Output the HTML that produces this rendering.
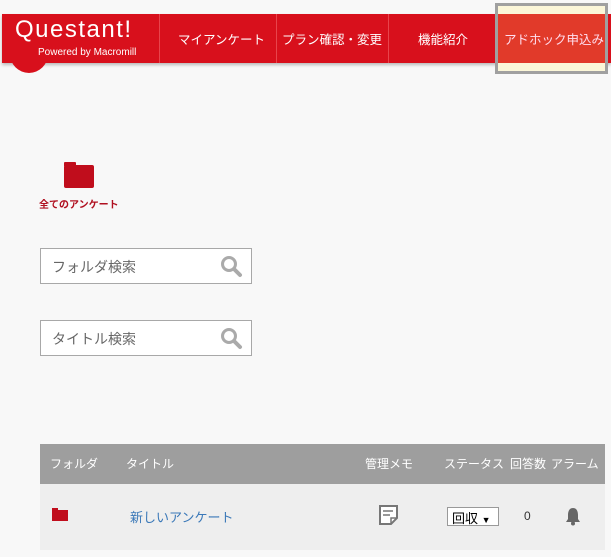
<!DOCTYPE html>
<html><head><meta charset="utf-8"><style>
*{margin:0;padding:0;box-sizing:border-box}
body{width:611px;height:557px;background:#f8f8f8;position:relative;overflow:hidden;font-family:"Liberation Sans","Noto Sans CJK JP",sans-serif}
.abs{position:absolute}
.hdr{left:2px;top:14px;width:609px;height:49px;background:#d8101c;box-shadow:0 2px 3px rgba(0,0,0,.25)}
.circ{left:10px;top:40px;width:38px;height:33px;border-radius:0 0 19px 19px;background:#d8101c}
.nav{color:#fff;font-size:12.5px;top:29px;white-space:nowrap}
.div{top:14px;width:1px;height:49px;background:#e8444c}
.sb{left:40px;width:212px;height:36px;border:1px solid #a8a8a8;background:#fff;font-size:14px;color:#666;padding:8px 0 0 11px}
.th{color:#fff;font-size:12px;top:455px}
</style></head><body>
<div class="abs hdr"></div>
<div class="abs circ"></div>
<div class="abs" style="left:15px;top:16px;color:#fff;font-size:24px;letter-spacing:1.5px;font-family:'Liberation Sans',sans-serif">Questant!</div>
<div class="abs" style="left:38px;top:47px;color:#fff;font-size:10px">Powered by Macromill</div>
<div class="abs div" style="left:159px"></div>
<div class="abs div" style="left:276px"></div>
<div class="abs div" style="left:388px"></div>
<div class="abs nav" style="left:178px">マイアンケート</div>
<div class="abs nav" style="left:282px">プラン確認・変更</div>
<div class="abs nav" style="left:418px">機能紹介</div>
<div class="abs" style="left:495px;top:3px;width:113px;height:71px;border:3px solid #a0a0a0;background:#fbf6d8"></div>
<div class="abs" style="left:498px;top:14px;width:107px;height:49px;background:#e13a2a"></div>
<div class="abs nav" style="left:504px;color:#fde">アドホック申込み</div>
<div class="abs" style="left:64px;top:162px;width:12px;height:4px;background:#c00d1c;border-radius:1px 1px 0 0"></div>
<div class="abs" style="left:64px;top:165px;width:30px;height:23px;background:#c00d1c;border-radius:2px"></div>
<div class="abs" style="left:39px;top:196px;font-size:10px;font-weight:bold;color:#b01020">全てのアンケート</div>
<div class="abs sb" style="top:248px">フォルダ検索</div>
<div class="abs sb" style="top:320px">タイトル検索</div>
<svg class="abs" style="left:219px;top:254px" width="24" height="24"><circle cx="10" cy="10" r="6.5" fill="none" stroke="#aaa" stroke-width="3"/><path d="M15 15L21 21" stroke="#aaa" stroke-width="4" stroke-linecap="round"/></svg>
<svg class="abs" style="left:219px;top:326px" width="24" height="24"><circle cx="10" cy="10" r="6.5" fill="none" stroke="#aaa" stroke-width="3"/><path d="M15 15L21 21" stroke="#aaa" stroke-width="4" stroke-linecap="round"/></svg>
<div class="abs" style="left:40px;top:444px;width:565px;height:40px;background:#9e9e9e"></div>
<div class="abs" style="left:40px;top:484px;width:565px;height:66px;background:#eee"></div>
<div class="abs th" style="left:50px">フォルダ</div>
<div class="abs th" style="left:126px">タイトル</div>
<div class="abs th" style="left:365px">管理メモ</div>
<div class="abs th" style="left:444px">ステータス</div>
<div class="abs th" style="left:510px">回答数</div>
<div class="abs th" style="left:551px">アラーム</div>
<div class="abs" style="left:52px;top:508px;width:6px;height:3px;background:#c00d1c"></div>
<div class="abs" style="left:52px;top:510px;width:16px;height:11px;background:#c00d1c"></div>
<div class="abs" style="left:130px;top:507px;font-size:13px;color:#3a78b8">新しいアンケート</div>
<svg class="abs" style="left:378px;top:504px" width="22" height="22"><path d="M2 2H19V14L13 20H2Z" fill="#fff" stroke="#777" stroke-width="2"/><path d="M5 7H15M5 11H12" stroke="#777" stroke-width="1.5"/><path d="M13 20V14H19" fill="none" stroke="#777" stroke-width="1.5"/></svg>
<div class="abs" style="left:447px;top:507px;width:52px;height:19px;border:1px solid #999;background:#fff;font-size:13px;padding:0 0 0 4px">回収 <span style="font-size:9px">▼</span></div>
<div class="abs" style="left:524px;top:509px;font-size:12px;color:#333">0</div>
<svg class="abs" style="left:564px;top:506px" width="18" height="20"><path d="M9 2C5 2 4 6 4 9V13L2 16H16L14 13V9C14 6 13 2 9 2Z" fill="#666"/><circle cx="9" cy="17.5" r="2" fill="#666"/></svg>
</body></html>
